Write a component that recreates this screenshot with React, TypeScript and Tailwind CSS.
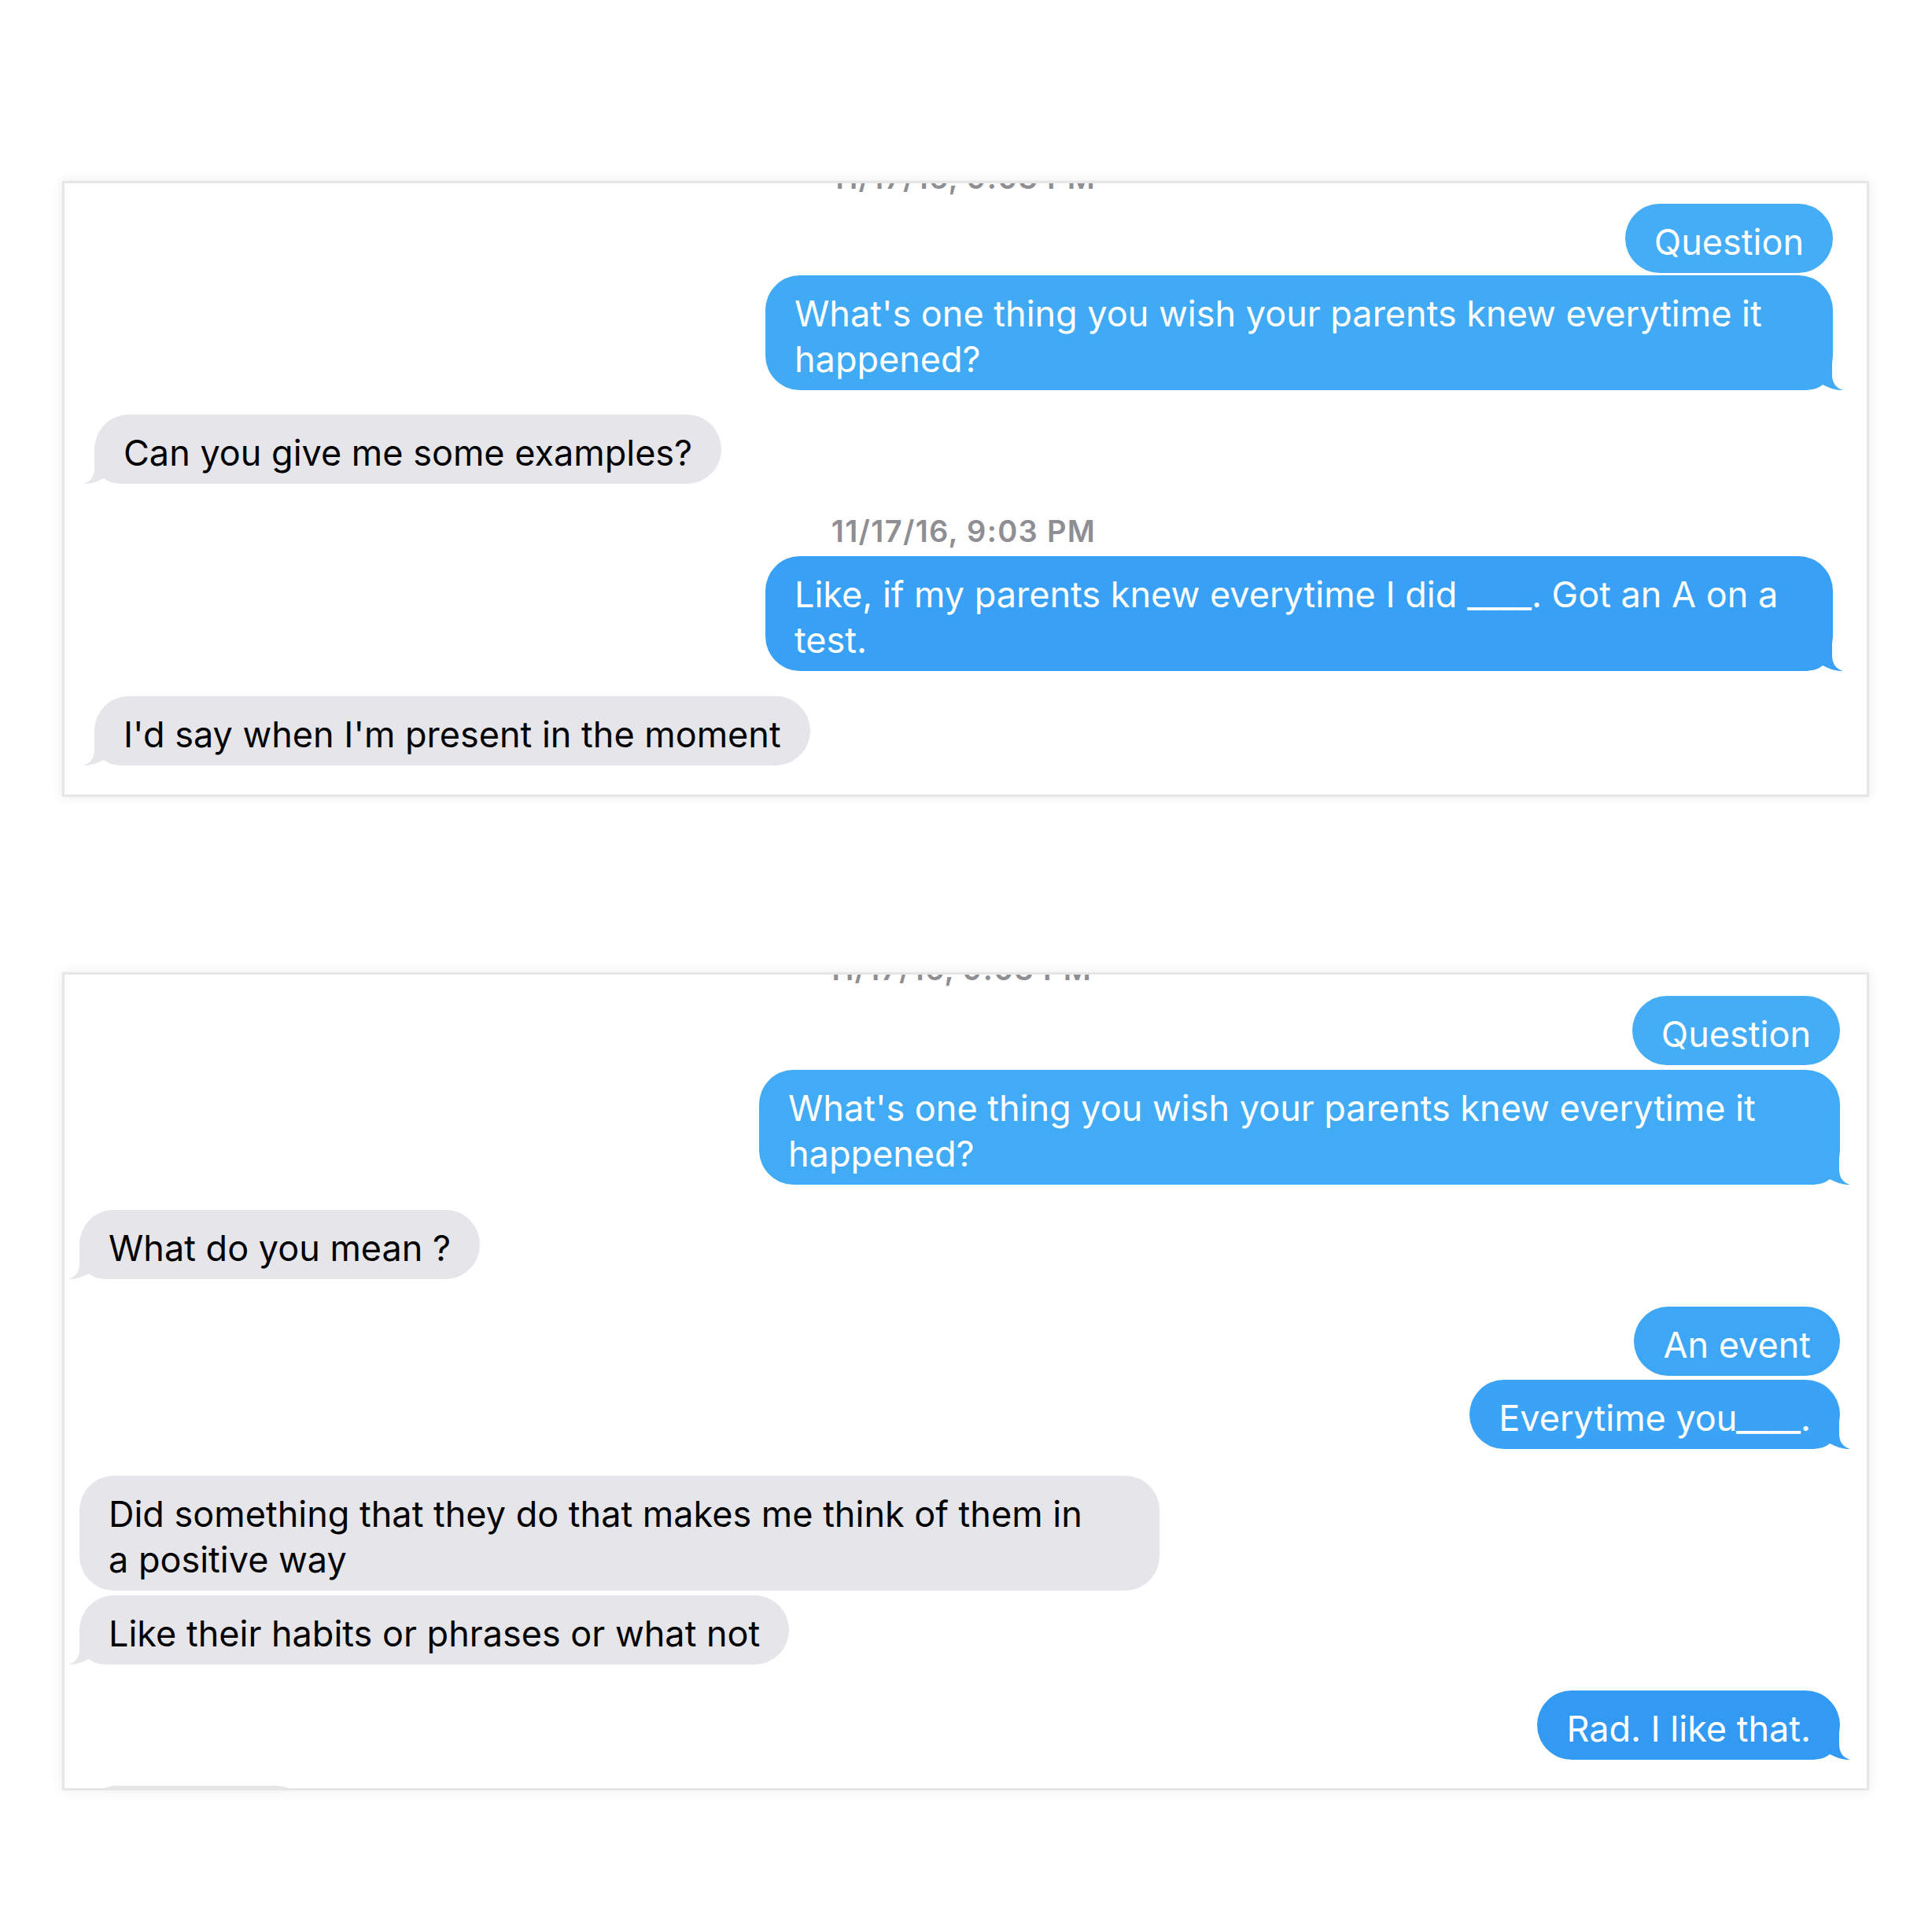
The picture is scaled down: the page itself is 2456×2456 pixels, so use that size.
import React from "react";

type Side = "l" | "r";

function LeftTail({ fill }: { fill: string }) {
  return (
    <svg
      className="absolute -left-[14px] bottom-0"
      width="60"
      height="44"
      viewBox="0 0 60 44"
      aria-hidden="true"
    >
      <path
        d="M14,0 L14,24 C14,34 10,41 0,44 C8,44.5 16,42 26,37 C32,42 40,44 50,44 L60,44 L60,0 Z"
        fill={fill}
      />
    </svg>
  );
}

function RightTail({ fill }: { fill: string }) {
  return (
    <svg
      className="absolute -right-[13px] bottom-0"
      width="60"
      height="44"
      viewBox="0 0 60 44"
      aria-hidden="true"
    >
      <path
        d="M46,0 L46,24 C46,34 50,41 60,44 C52,44.5 44,42 34,37 C28,42 20,44 10,44 L0,44 L0,0 Z"
        fill={fill}
      />
    </svg>
  );
}

function Bubble({
  side,
  color,
  tail,
  className,
  children,
}: {
  side: Side;
  color: string;
  tail?: boolean;
  className: string;
  children: React.ReactNode;
}) {
  const isR = side === "r";
  return (
    <div className={`flex ${isR ? "justify-end" : "justify-start"}`}>
      <div
        className={`relative rounded-[44px] py-[15px] pl-[37px] pr-[37px] text-[45px] leading-[58px] whitespace-nowrap ${
          isR ? "text-white" : "text-black"
        } ${className}`}
      >
        {tail && (isR ? <RightTail fill={color} /> : <LeftTail fill={color} />)}
        <span className="relative top-[5px]">{children}</span>
      </div>
    </div>
  );
}

function Stamp({ className }: { className: string }) {
  return (
    <div
      className={`h-[44px] text-center text-[38px] leading-[44px] font-semibold tracking-[0.035em] text-[#8e8e93] ${className}`}
    >
      11/17/16, 9:03 PM
    </div>
  );
}

export default function App() {
  return (
    <div className="min-h-[2456px] w-[2456px] bg-white font-['Inter','Liberation_Sans',sans-serif] pt-[233px]">
      {/* Card 1 */}
      <div className="ml-[82px] w-[2291px] h-[777px] overflow-hidden bg-white shadow-[0_0_0_3px_#e6e6e6,0_0_14px_4px_rgba(0,0,0,0.07)]">
        <div className="flex flex-col pl-[38px] pr-[43px]">
          <Stamp className="-mt-[29px]" />
          <div className="mt-[11px]">
            <Bubble side="r" color="#45adf5" className="bg-[#45adf5]">
              Question
            </Bubble>
          </div>
          <div className="mt-[3px]">
            <Bubble side="r" color="#41aaf5" tail className="bg-[#41aaf5] w-[1357px]">
              What's one thing you wish your parents knew everytime it
              <br />
              happened?
            </Bubble>
          </div>
          <div className="mt-[31px]">
            <Bubble side="l" color="#e5e5ea" tail className="bg-[#e5e5ea]">
              Can you give me some examples?
            </Bubble>
          </div>
          <Stamp className="mt-[38px]" />
          <div className="mt-[10px]">
            <Bubble side="r" color="#38a1f5" tail className="bg-[#38a1f5] w-[1357px]">
              Like, if my parents knew everytime I did ____. Got an A on a
              <br />
              test.
            </Bubble>
          </div>
          <div className="mt-[32px]">
            <Bubble side="l" color="#e5e5ea" tail className="bg-[#e5e5ea]">
              I'd say when I'm present in the moment
            </Bubble>
          </div>
        </div>
      </div>

      {/* Card 2 */}
      <div className="ml-[82px] mt-[229px] w-[2291px] h-[1034px] overflow-hidden bg-white shadow-[0_0_0_3px_#e6e6e6,0_0_14px_4px_rgba(0,0,0,0.07)]">
        <div className="flex flex-col pl-[19px] pr-[34px]">
          <Stamp className="-mt-[29px]" />
          <div className="mt-[12px]">
            <Bubble side="r" color="#45adf5" className="bg-[#45adf5]">
              Question
            </Bubble>
          </div>
          <div className="mt-[6px]">
            <Bubble side="r" color="#42abf5" tail className="bg-[#42abf5] w-[1374px]">
              What's one thing you wish your parents knew everytime it
              <br />
              happened?
            </Bubble>
          </div>
          <div className="mt-[32px]">
            <Bubble side="l" color="#e5e5ea" tail className="bg-[#e5e5ea]">
              What do you mean ?
            </Bubble>
          </div>
          <div className="mt-[35px]">
            <Bubble side="r" color="#3da6f5" className="bg-[#3da6f5]">
              An event
            </Bubble>
          </div>
          <div className="mt-[5px]">
            <Bubble side="r" color="#3ba3f5" tail className="bg-[#3ba3f5]">
              Everytime you____.
            </Bubble>
          </div>
          <div className="mt-[34px]">
            <Bubble side="l" color="#e5e5ea" className="bg-[#e5e5ea] w-[1373px]">
              Did something that they do that makes me think of them in
              <br />a positive way
            </Bubble>
          </div>
          <div className="mt-[6px]">
            <Bubble side="l" color="#e5e5ea" tail className="bg-[#e5e5ea]">
              Like their habits or phrases or what not
            </Bubble>
          </div>
          <div className="mt-[33px]">
            <Bubble side="r" color="#339af4" tail className="bg-[#339af4]">
              Rad. I like that.
            </Bubble>
          </div>
          <div className="mt-[33px] pl-[4px]">
            <div className="h-[88px] w-[290px] rounded-[44px] bg-[#e5e5ea]" />
          </div>
        </div>
      </div>
    </div>
  );
}
